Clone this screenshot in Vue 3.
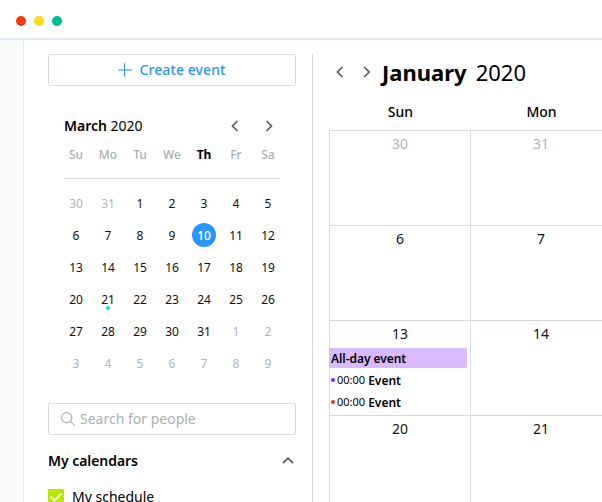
<script setup>
const weekdays = ['Su', 'Mo', 'Tu', 'We', 'Th', 'Fr', 'Sa']

const miniDays = [
  ...[30, 31].map((n) => ({ n, out: true })),
  ...Array.from({ length: 31 }, (_, i) => ({
    n: i + 1,
    selected: i + 1 === 10,
    marked: i + 1 === 21,
  })),
  ...Array.from({ length: 9 }, (_, i) => ({ n: i + 1, out: true })),
]

const monthDays = [
  { n: 30, out: true },
  { n: 31, out: true },
  { n: 6 },
  { n: 7 },
  {
    n: 13,
    allDay: 'All-day event',
    events: [
      { time: '00:00', title: 'Event', color: 'violet' },
      { time: '00:00', title: 'Event', color: 'red' },
    ],
  },
  { n: 14 },
  { n: 20 },
  { n: 21 },
]
</script>

<template>
  <div class="window">
    <header class="titlebar">
      <span class="light close"></span>
      <span class="light minimize"></span>
      <span class="light expand"></span>
    </header>
    <div class="body">
      <div class="rail"></div>
      <aside class="sidebar">
        <button class="create">
          <svg width="14" height="14" viewBox="0 0 14 14">
            <path d="M0.3 7H13.7" stroke="#6ab5ff" stroke-width="1.6" />
            <path d="M6.5 0.3V13.7" stroke="#2996ff" stroke-width="1" />
          </svg>
          <span>Create event</span>
        </button>

        <section class="mini">
          <div class="mini-head">
            <div class="mini-title"><b>March</b> 2020</div>
            <svg class="chev" width="8" height="12" viewBox="0 0 8 12"><path d="M6.4 1L1.5 6L6.4 11" /></svg>
            <svg class="chev next" width="8" height="12" viewBox="0 0 8 12"><path d="M1.6 1L6.5 6L1.6 11" /></svg>
          </div>
          <div class="week">
            <span v-for="d in weekdays" :key="d" :class="{ today: d === 'Th' }">{{ d }}</span>
          </div>
          <div class="rule"></div>
          <div class="days">
            <span
              v-for="(d, i) in miniDays"
              :key="i"
              class="day"
              :class="{ out: d.out, selected: d.selected, marked: d.marked }"
            ><i>{{ d.n }}</i></span>
          </div>
        </section>

        <div class="search">
          <svg width="14" height="14" viewBox="0 0 14 14">
            <circle cx="5.7" cy="5.7" r="5.1" />
            <path d="M9.4 9.4L13.6 13.4" />
          </svg>
          <span>Search for people</span>
        </div>

        <div class="group">
          <span>My calendars</span>
          <svg class="chev" width="12" height="8" viewBox="0 0 12 8"><path d="M1 6.2L6 1.2L11 6.2" /></svg>
        </div>
        <div class="item">
          <span class="check">
            <svg width="16" height="16" viewBox="0 0 16 16"><path d="M2.5 7.5L6.6 11.4L13.5 4.6" /></svg>
          </span>
          <span>My schedule</span>
        </div>
      </aside>

      <main class="main">
        <div class="month-head">
          <svg class="chev" width="8" height="12" viewBox="0 0 8 12"><path d="M6.4 1L1.5 6L6.4 11" /></svg>
          <svg class="chev month-next" width="8" height="12" viewBox="0 0 8 12"><path d="M1.2 1L6.1 6L1.2 11" /></svg>
          <h1><b>January</b><span>2020</span></h1>
        </div>
        <div class="month-week"><span>Sun</span><span>Mon</span></div>
        <div class="month">
          <div v-for="(d, i) in monthDays" :key="i" class="cell">
            <div class="num" :class="{ out: d.out }">{{ d.n }}</div>
            <div v-if="d.allDay" class="all-day">{{ d.allDay }}</div>
            <div v-for="(e, j) in d.events" :key="j" class="event">
              <span class="dot" :class="e.color"></span>
              <span class="time">{{ e.time }}</span>
              <b>{{ e.title }}</b>
            </div>
          </div>
        </div>
      </main>
    </div>
  </div>
</template>

<style>
body {
  margin: 0;
  overflow: hidden;
}
</style>

<style scoped>
.window,
.window * {
  box-sizing: border-box;
}
.window {
  width: 602px;
  height: 502px;
  overflow: hidden;
  display: flex;
  flex-direction: column;
  background: #fff;
  color: #000;
  font-family: 'Noto Sans', sans-serif;
  font-size: 14px;
}
svg {
  display: block;
  flex: none;
  fill: none;
}
.titlebar {
  flex: none;
  height: 40px;
  border-bottom: 2px solid #dceef5;
  padding: 16px 0 0 16px;
  display: flex;
  gap: 8px;
}
.light {
  width: 10px;
  height: 10px;
  border-radius: 50%;
}
.close { background: #f13d05; }
.minimize { background: #ffd91e; }
.expand { background: #02ba8c; }
.body {
  flex: 1;
  min-height: 0;
  display: flex;
}
.rail {
  flex: none;
  width: 24px;
  background: #f9fbfa;
  border-right: 1px solid #e5e8e9;
}
.sidebar {
  flex: none;
  width: 288px;
  padding: 14px 16px 0 24px;
}
.create {
  width: 248px;
  height: 32px;
  padding: 0;
  background: #fff;
  border: 1px solid #d7dcdd;
  border-radius: 2px;
  display: flex;
  align-items: center;
  justify-content: center;
  gap: 7px;
  font: 500 14px/20px 'Noto Sans', sans-serif;
  letter-spacing: 0.1px;
  color: #2996ff;
}
.mini {
  padding: 30px 12px 0;
}
.mini-head {
  height: 20px;
  padding: 0 11px 0 4px;
  display: flex;
  align-items: center;
}
.mini-title {
  flex: 1;
  line-height: 20px;
}
.mini-title b {
  font-weight: 600;
}
.chev {
  stroke: #555b61;
  stroke-width: 1.7;
}
.next {
  margin-left: 26px;
}
.week {
  margin-top: 9px;
  display: grid;
  grid-template-columns: repeat(7, 32px);
  text-align: center;
  font-size: 12px;
  line-height: 20px;
  font-weight: 500;
  color: #a9afb4;
}
.week .today {
  color: #000;
  font-weight: 700;
}
.rule {
  margin: 13px 4px 9px;
  height: 1px;
  background: #d7dcdd;
}
.days {
  display: grid;
  grid-template-columns: repeat(7, 32px);
  grid-auto-rows: 32px;
}
.day {
  display: flex;
  align-items: center;
  justify-content: center;
  position: relative;
  font-size: 12px;
  color: #111;
}
.day i {
  font-style: normal;
  width: 24px;
  height: 24px;
  line-height: 24px;
  border-radius: 50%;
  text-align: center;
}
.day.out {
  color: #afb5b9;
}
.day.selected i {
  margin-bottom: 2px;
  line-height: 26px;
  background: #2996ff;
  color: #fff;
  font-weight: 500;
}
.day.marked::after {
  content: '';
  position: absolute;
  left: 14px;
  top: 22px;
  width: 4px;
  height: 4px;
  border-radius: 50%;
  background: #00d9f5;
}
.search {
  margin-top: 23px;
  height: 32px;
  border: 1px solid #d7dcdd;
  border-radius: 2px;
  display: flex;
  align-items: center;
  gap: 5px;
  padding-left: 12px;
  line-height: 20px;
  color: #a9afb4;
}
.search svg {
  stroke: #a9afb4;
  stroke-width: 1.1;
}
.group {
  margin-top: 16px;
  height: 20px;
  padding-right: 2px;
  display: flex;
  align-items: center;
  justify-content: space-between;
  line-height: 20px;
  font-weight: 600;
  letter-spacing: -0.05px;
}
.item {
  margin-top: 16px;
  height: 20px;
  display: flex;
  align-items: center;
  gap: 8px;
  line-height: 20px;
}
.check {
  width: 16px;
  height: 16px;
  border-radius: 1px;
  background: #b9e800;
}
.check svg {
  stroke: #fff;
  stroke-width: 2.1;
}
.main {
  flex: none;
  width: 306px;
  margin-top: 14px;
  border-left: 1px solid #d7dcdd;
  padding-left: 16px;
}
.month-head {
  height: 36px;
  padding-left: 7px;
  display: flex;
  align-items: center;
}
.month-next {
  margin-left: 19px;
}
h1 {
  margin: 0 0 0 11px;
  display: flex;
  gap: 9px;
  font-size: 22px;
  line-height: 30px;
  font-weight: 400;
}
h1 b {
  font-weight: 700;
}
.month-week {
  height: 40px;
  padding: 12px 0 0 1px;
  display: grid;
  grid-template-columns: 141px 141px;
  text-align: center;
  line-height: 20px;
  font-weight: 500;
}
.month {
  display: grid;
  grid-template-columns: 141px 148px;
  grid-auto-rows: 95px;
}
.cell {
  border-top: 1px solid #d7dcdd;
  border-left: 1px solid #d7dcdd;
}
.num {
  width: 140px;
  padding-top: 3px;
  height: 27px;
  line-height: 20px;
  text-align: center;
  color: #111;
}
.num.out {
  color: #afb5b9;
}
.all-day {
  margin: 0 3px 0 -1px;
  height: 20px;
  padding-left: 2px;
  border-radius: 2px;
  background: #d9b9ff;
  font-size: 12px;
  line-height: 21px;
  font-weight: 600;
  letter-spacing: -0.05px;
}
.event {
  margin-top: 2px;
  height: 20px;
  display: flex;
  align-items: center;
  padding-left: 1px;
  font-size: 12px;
  line-height: 20px;
}
.event b {
  font-weight: 600;
  margin-left: 3px;
  padding-top: 2px;
}
.time {
  margin-left: 2px;
  font-size: 11px;
}
.dot {
  width: 4px;
  height: 4px;
  border-radius: 50%;
}
.violet { background: #8b22ff; }
.red { background: #e73522; }
</style>
